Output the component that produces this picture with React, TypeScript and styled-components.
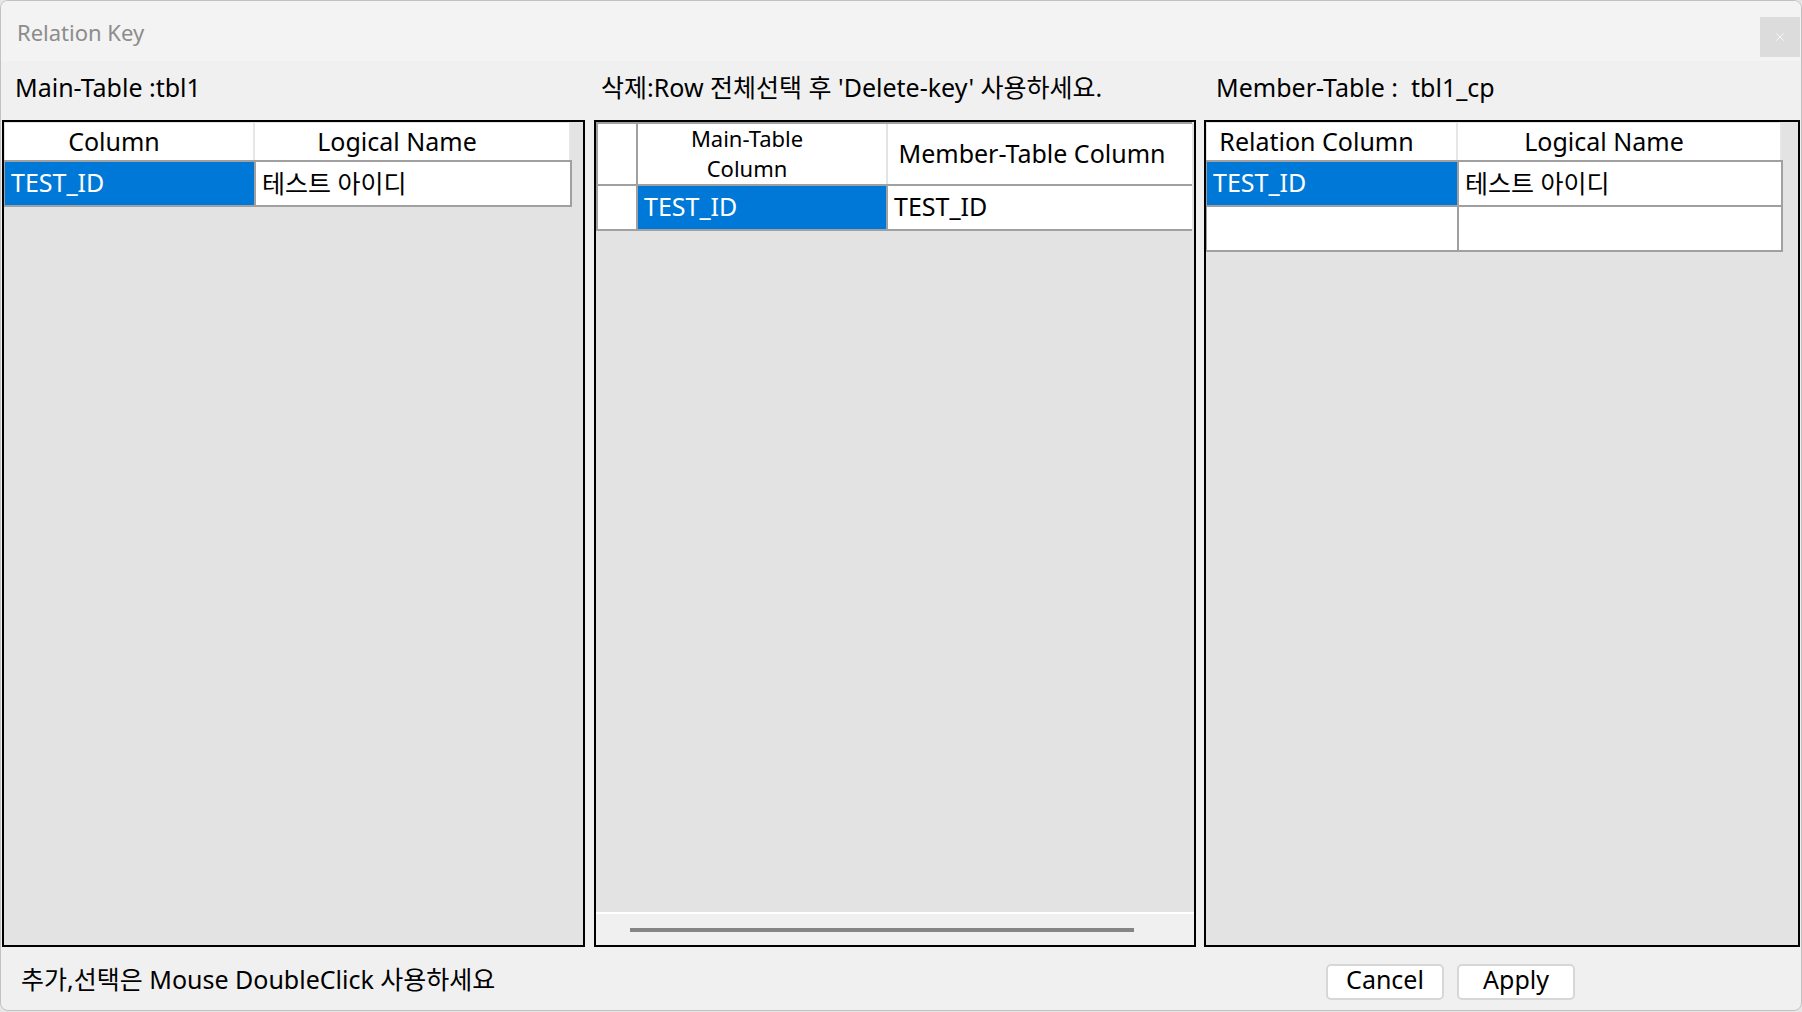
import React from 'react';
import styled, { createGlobalStyle } from 'styled-components';
import { X } from 'lucide-react';

const GlobalStyle = createGlobalStyle`
  html, body { margin: 0; padding: 0; background: #e6e6e6; overflow: hidden; }
  body { font-family: "Noto Sans", "Noto Sans CJK KR", sans-serif; }
  * { box-sizing: border-box; }
`;

const Window = styled.div`
  width: 1802px;
  height: 1011px;
  border: 1px solid #c2c2c2;
  border-radius: 8px;
  background: #f0f0f0;
  overflow: hidden;
  display: flex;
  flex-direction: column;
`;

const TitleBar = styled.div`
  height: 60px;
  flex: none;
  background: #f3f3f3;
  display: flex;
  align-items: flex-start;
`;

const Title = styled.div`
  margin: 16px 0 0 16px;
  font-size: 22px;
  line-height: 30px;
  color: #8c8c8c;
`;

const CloseButton = styled.div`
  margin: 16px 1px 0 auto;
  width: 40px;
  height: 40px;
  background: #dcdcdc;
  display: flex;
  align-items: center;
  justify-content: center;
  color: #f6f6f6;
`;

const Row = styled.div<{ $h: number }>`
  height: ${p => p.$h}px;
  flex: none;
  display: flex;
  padding-left: 1px;
`;

const Label = styled.div<{ $w: number; $pl: number; $mr: number }>`
  width: ${p => p.$w}px;
  margin-right: ${p => p.$mr}px;
  padding: 9px 0 0 ${p => p.$pl}px;
  font-size: 25px;
  line-height: 34px;
  color: #000;
  white-space: pre;
`;

const Panel = styled.div<{ $w: number; $mr: number }>`
  width: ${p => p.$w}px;
  margin-right: ${p => p.$mr}px;
  height: 827px;
  border: 2px solid #000;
  background: #e3e3e3;
  display: flex;
  flex-direction: column;
  font-size: 25px;
  color: #000;
`;

const Grid = styled.div<{ $framed?: boolean }>`
  display: flex;
  flex-direction: column;
  align-self: flex-start;
  margin-top: ${p => (p.$framed ? 0 : 1)}px;
  border-top: ${p => (p.$framed ? '2px solid #a0a0a0' : 'none')};
  border-left: ${p => (p.$framed ? '2px solid #a0a0a0' : 'none')};
`;

const HeaderRow = styled.div<{ $h: number; $framed?: boolean }>`
  display: flex;
  height: ${p => p.$h}px;
  margin-left: ${p => (p.$framed ? 0 : 1)}px;
  border-bottom: ${p => (p.$framed ? '2px solid #a0a0a0' : 'none')};
  box-sizing: content-box;
`;

const HeaderCell = styled.div<{ $w: number; $pr: number; $sep: string }>`
  width: ${p => p.$w}px;
  flex: none;
  background: #fff;
  display: flex;
  flex-direction: column;
  align-items: center;
  justify-content: center;
  text-align: center;
  padding: 0 ${p => p.$pr}px 2px 4px;
  line-height: 24px;
  white-space: nowrap;
  border-right: 1px solid ${p => p.$sep};
  border-right-width: ${p => (p.$sep === 'transparent' ? 0 : 2)}px;
`;

const HeaderLine = styled.span`
  display: block;
  font-size: 22px;
  line-height: 30px;
`;

const Rows = styled.div<{ $framed?: boolean }>`
  display: flex;
  flex-direction: column;
  border-top: ${p => (p.$framed ? 'none' : '2px solid #a0a0a0')};
`;

const DataRow = styled.div<{ $framed?: boolean }>`
  display: flex;
  height: 45px;
  border-bottom: 2px solid #a0a0a0;
  border-left: ${p => (p.$framed ? 'none' : '1px solid #a0a0a0')};
`;

const DataCell = styled.div<{ $w: number; $selected?: boolean; $last?: boolean }>`
  width: ${p => p.$w}px;
  flex: none;
  background: ${p => (p.$selected ? '#0078d7' : '#fff')};
  color: ${p => (p.$selected ? '#fff' : '#000')};
  display: flex;
  align-items: center;
  padding: 0 0 4px 6px;
  white-space: nowrap;
  overflow: hidden;
  border-right: ${p => (p.$last ? 'none' : '2px solid #a0a0a0')};
`;

const HScroll = styled.div`
  margin-top: auto;
  height: 33px;
  border-top: 2px solid #fff;
  background: #f0f0f0;
  padding: 14px 0 0 34px;
`;

const Thumb = styled.div`
  width: 504px;
  height: 4px;
  background: #858585;
`;

const Footer = styled.div`
  height: 63px;
  flex: none;
  display: flex;
  align-items: center;
  padding-left: 20px;
`;

const FooterText = styled.div`
  font-size: 25px;
  line-height: 34px;
  color: #000;
`;

const Buttons = styled.div`
  margin: 6px 226px 0 auto;
  display: flex;
  gap: 13px;
`;

const Button = styled.button`
  width: 118px;
  height: 36px;
  border: 2px solid #d7d7d7;
  border-radius: 5px;
  background: #fff;
  font-family: "Noto Sans", "Noto Sans CJK KR", sans-serif;
  font-size: 25px;
  line-height: 30px;
  color: #000;
  padding: 0 0 5px 0;
  display: flex;
  align-items: center;
  justify-content: center;
`;

export default function App() {
  return (
    <>
      <GlobalStyle />
      <Window>
        <TitleBar>
          <Title>Relation Key</Title>
          <CloseButton>
            <X size={14} strokeWidth={1.6} />
          </CloseButton>
        </TitleBar>

        <Row $h={59}>
          <Label $w={583} $pl={13} $mr={9}>Main-Table :tbl1</Label>
          <Label $w={602} $pl={7} $mr={8}>삭제:Row 전체선택 후 'Delete-key' 사용하세요.</Label>
          <Label $w={596} $pl={12} $mr={0}>{'Member-Table :  tbl1_cp'}</Label>
        </Row>

        <Row $h={827}>
          <Panel $w={583} $mr={9}>
            <Grid>
              <HeaderRow $h={37}>
                <HeaderCell $w={250} $pr={34} $sep="#e6e6e6">Column</HeaderCell>
                <HeaderCell $w={316} $pr={34} $sep="#e6e6e6">Logical Name</HeaderCell>
              </HeaderRow>
              <Rows>
                <DataRow>
                  <DataCell $w={251} $selected>TEST_ID</DataCell>
                  <DataCell $w={316}>테스트 아이디</DataCell>
                </DataRow>
              </Rows>
            </Grid>
          </Panel>

          <Panel $w={602} $mr={8}>
            <Grid $framed>
              <HeaderRow $h={60} $framed>
                <HeaderCell $w={40} $pr={0} $sep="#a0a0a0" />
                <HeaderCell $w={250} $pr={34} $sep="#e3e3e3">
                  <HeaderLine>Main-Table</HeaderLine>
                  <HeaderLine>Column</HeaderLine>
                </HeaderCell>
                <HeaderCell $w={304} $pr={20} $sep="transparent">Member-Table Column</HeaderCell>
              </HeaderRow>
              <Rows $framed>
                <DataRow $framed>
                  <DataCell $w={40} />
                  <DataCell $w={250} $selected>TEST_ID</DataCell>
                  <DataCell $w={304} $last>TEST_ID</DataCell>
                </DataRow>
              </Rows>
            </Grid>
            <HScroll>
              <Thumb />
            </HScroll>
          </Panel>

          <Panel $w={596} $mr={0}>
            <Grid>
              <HeaderRow $h={37}>
                <HeaderCell $w={251} $pr={34} $sep="#e6e6e6">Relation Column</HeaderCell>
                <HeaderCell $w={324} $pr={34} $sep="#e6e6e6">Logical Name</HeaderCell>
              </HeaderRow>
              <Rows>
                <DataRow>
                  <DataCell $w={252} $selected>TEST_ID</DataCell>
                  <DataCell $w={324}>테스트 아이디</DataCell>
                </DataRow>
                <DataRow>
                  <DataCell $w={252} />
                  <DataCell $w={324} />
                </DataRow>
              </Rows>
            </Grid>
          </Panel>
        </Row>

        <Footer>
          <FooterText>추가,선택은 Mouse DoubleClick 사용하세요</FooterText>
          <Buttons>
            <Button>Cancel</Button>
            <Button>Apply</Button>
          </Buttons>
        </Footer>
      </Window>
    </>
  );
}
